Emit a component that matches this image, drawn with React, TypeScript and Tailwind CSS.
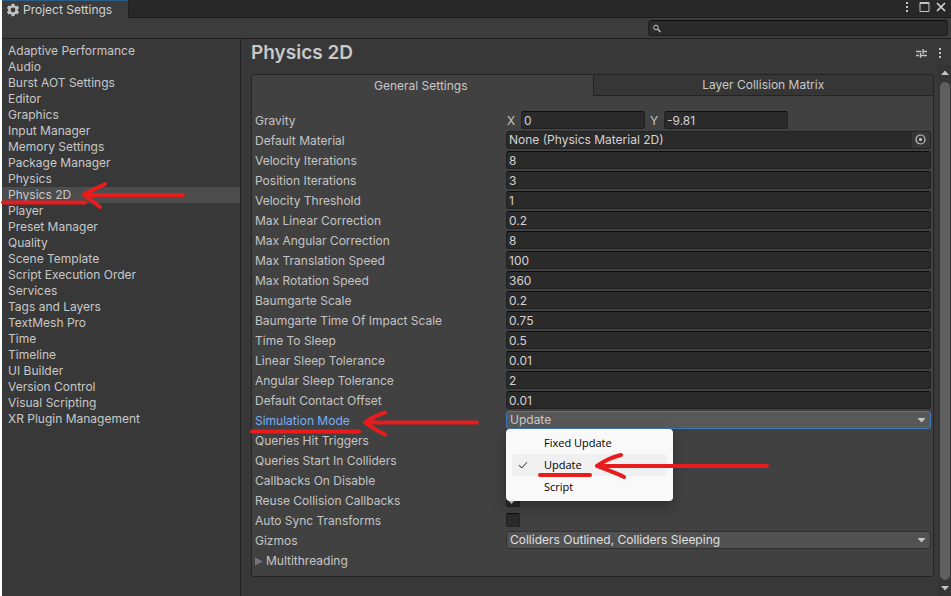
import type { ReactNode } from "react";

const categories = [
  "Adaptive Performance",
  "Audio",
  "Burst AOT Settings",
  "Editor",
  "Graphics",
  "Input Manager",
  "Memory Settings",
  "Package Manager",
  "Physics",
  "Physics 2D",
  "Player",
  "Preset Manager",
  "Quality",
  "Scene Template",
  "Script Execution Order",
  "Services",
  "Tags and Layers",
  "TextMesh Pro",
  "Time",
  "Timeline",
  "UI Builder",
  "Version Control",
  "Visual Scripting",
  "XR Plugin Management",
];

const numberFields: [string, string][] = [
  ["Velocity Iterations", "8"],
  ["Position Iterations", "3"],
  ["Velocity Threshold", "1"],
  ["Max Linear Correction", "0.2"],
  ["Max Angular Correction", "8"],
  ["Max Translation Speed", "100"],
  ["Max Rotation Speed", "360"],
  ["Baumgarte Scale", "0.2"],
  ["Baumgarte Time Of Impact Scale", "0.75"],
  ["Time To Sleep", "0.5"],
  ["Linear Sleep Tolerance", "0.01"],
  ["Angular Sleep Tolerance", "2"],
  ["Default Contact Offset", "0.01"],
];

const toggles: [string, boolean][] = [
  ["Queries Hit Triggers", true],
  ["Queries Start In Colliders", true],
  ["Callbacks On Disable", true],
  ["Reuse Collision Callbacks", true],
  ["Auto Sync Transforms", false],
];

const modes = ["Fixed Update", "Update", "Script"];

const fieldClass =
  "block h-[18px] w-full min-w-0 rounded-[3px] border border-[#212121] border-t-[#0d0d0d] bg-[#2a2a2a] px-0.5 text-[#d2d2d2] outline-none";

const toId = (label: string) => label.toLowerCase().replace(/ /g, "-");

function Row({ label, active, children }: { label: string; active?: boolean; children: ReactNode }) {
  return (
    <div className="grid h-5 grid-cols-[251px_minmax(0,1fr)] items-start">
      <label htmlFor={toId(label)} className={active ? "leading-5 text-[#7baefa]" : "leading-5 text-[#c4c4c4]"}>
        {label}
      </label>
      {children}
    </div>
  );
}

function Caret() {
  return (
    <svg className="pointer-events-none absolute top-[7px] right-[5px]" width="9" height="5" aria-hidden="true">
      <path d="M0.500 0h8L4.500 4.500z" fill="#c4c4c4" />
    </svg>
  );
}

function Kebab() {
  return (
    <svg width="4" height="12" aria-hidden="true" fill="#c4c4c4">
      <path d="M1 1h2v2H1zM1 5h2v2H1zM1 9h2v2H1z" />
    </svg>
  );
}

function TitleBar() {
  return (
    <header className="flex h-[18px] justify-between border-b border-[#1c1c1c] bg-[#282828]">
      <h1 className="-mb-px flex w-[127px] items-center gap-[3px] border-t border-r border-t-[#2c5d87] border-r-[#1f1f1f] bg-[#3c3c3c] pl-1 leading-4 text-[#d2d2d2]">
        <svg width="14" height="14" viewBox="0 0 14 14" aria-hidden="true">
          <g fill="#c4c4c4">
            <path d="M5.500 0.800h3v12.400h-3z" />
            <path d="M5.500 0.800h3v12.400h-3z" transform="rotate(60 7 7)" />
            <path d="M5.500 0.800h3v12.400h-3z" transform="rotate(120 7 7)" />
            <circle cx="7" cy="7" r="4.800" />
          </g>
          <circle cx="7" cy="7" r="2.400" fill="#3c3c3c" />
        </svg>
        Project Settings
      </h1>
      <div className="flex items-start gap-2.5 pr-[5px] pt-px">
        <button aria-label="Window menu">
          <Kebab />
        </button>
        <div className="flex gap-1.5">
          <button aria-label="Maximize">
            <svg width="11" height="12" aria-hidden="true">
              <path d="M1 1.500h9v9H1zM1 2.500h9" fill="none" stroke="#c4c4c4" />
            </svg>
          </button>
          <button aria-label="Close">
            <svg width="10" height="12" aria-hidden="true">
              <path d="M1 2l8 8M9 2l-8 8" stroke="#d2d2d2" strokeWidth="1.7" />
            </svg>
          </button>
        </div>
      </div>
    </header>
  );
}

function SearchBar() {
  return (
    <div className="flex h-[21px] items-start justify-end border-b border-[#1f1f1f] bg-[#3c3c3c] pt-0.5 pr-[3px]">
      <label className="flex h-4 w-[300px] items-center rounded-[4px] border border-[#1e1e1e] border-t-[#0d0d0d] bg-[#2a2a2a] pl-1">
        <svg width="9" height="9" aria-hidden="true" fill="none" stroke="#c4c4c4">
          <circle cx="3" cy="3.500" r="2.300" />
          <path d="M4.700 5.200L7.500 8" strokeWidth="1.300" />
        </svg>
        <input type="search" aria-label="Search settings" className="w-full bg-transparent outline-none" />
      </label>
    </div>
  );
}

function Sidebar() {
  return (
    <nav className="w-[239px] shrink-0 border-r border-[#1f1f1f] pt-1">
      <ul>
        {categories.map((name) => (
          <li key={name} className={name === "Physics 2D" ? "bg-[#4d4d4d]" : ""}>
            <button className="block w-full pl-1.5 text-left leading-4 text-[#c8c8c8]">{name}</button>
          </li>
        ))}
      </ul>
    </nav>
  );
}

function ModePopup() {
  return (
    <ul
      role="listbox"
      aria-label="Simulation Mode"
      className="absolute top-[18px] left-0 z-10 w-[167px] rounded-[4px] bg-[#f9f9f9] px-[6px] py-[3px] font-['Open_Sans','Noto_Sans',sans-serif] text-[11px] text-black shadow-[0_6px_14px_rgba(0,0,0,0.3)]"
    >
      {modes.map((mode) => (
        <li
          key={mode}
          role="option"
          aria-selected={mode === "Update"}
          className={
            mode === "Update"
              ? "flex h-[22px] items-center rounded-[3px] bg-[#f0f0f0]"
              : "flex h-[22px] items-center"
          }
        >
          <span className="w-8 pl-1.5">
            {mode === "Update" && (
              <svg width="10" height="8" aria-hidden="true">
                <path d="M1 4.200L3.700 7L9 1.200" fill="none" stroke="#222" />
              </svg>
            )}
          </span>
          {mode}
        </li>
      ))}
    </ul>
  );
}

function Panel() {
  return (
    <section className="rounded-[3px] border border-[#242424] bg-[#414141] pb-1">
      <div role="tablist" className="grid h-[21px] grid-cols-2 text-[#c8c8c8]">
        <button role="tab" aria-selected="true" className="pr-[3px]">
          General Settings
        </button>
        <button role="tab" aria-selected="false" className="border-b border-l border-[#242424] bg-[#363636]">
          Layer Collision Matrix
        </button>
      </div>
      <div className="pt-[15px] pr-0.5 pb-px pl-[3px]">
        <div
          role="group"
          aria-label="Gravity"
          className="grid h-5 grid-cols-[251px_minmax(0,1fr)] items-start text-[#c4c4c4]"
        >
          <span className="leading-5">Gravity</span>
          <div className="grid grid-cols-3 gap-1">
            <label className="flex items-start">
              <span className="w-[15px] shrink-0 pl-px leading-5">X</span>
              <input className={fieldClass} defaultValue="0" />
            </label>
            <label className="flex items-start">
              <span className="w-[15px] shrink-0 pl-px leading-5">Y</span>
              <input className={fieldClass} defaultValue="-9.81" />
            </label>
          </div>
        </div>
        <Row label="Default Material">
          <div className="flex h-[18px] overflow-hidden rounded-[3px] border border-[#212121] bg-[#2a2a2a]">
            <input
              id="default-material"
              className="min-w-0 flex-1 bg-transparent px-0.5 text-[#d2d2d2] outline-none"
              defaultValue="None (Physics Material 2D)"
            />
            <button aria-label="Pick material" className="flex w-[18px] items-center justify-center bg-[#373737]">
              <svg width="12" height="12" aria-hidden="true">
                <circle cx="5.500" cy="5.500" r="4.500" fill="none" stroke="#c4c4c4" strokeWidth="1.200" />
                <circle cx="5.500" cy="5.500" r="1.600" fill="#c4c4c4" />
              </svg>
            </button>
          </div>
        </Row>
        {numberFields.map(([label, value]) => (
          <Row key={label} label={label}>
            <input id={toId(label)} className={fieldClass} defaultValue={value} />
          </Row>
        ))}
        <Row label="Simulation Mode" active>
          <div className="relative">
            <select
              id="simulation-mode"
              defaultValue="Update"
              className="block h-[18px] w-full appearance-none rounded-[3px] border border-[#3a79bb] bg-[#585858] px-[3px] leading-4 text-[#c8c8c8] outline-none"
            >
              {modes.map((mode) => (
                <option key={mode}>{mode}</option>
              ))}
            </select>
            <Caret />
            <ModePopup />
          </div>
        </Row>
        {toggles.map(([label, checked]) => (
          <Row key={label} label={label}>
            <span className="relative mt-0.5 size-3.5">
              <input
                id={toId(label)}
                type="checkbox"
                defaultChecked={checked}
                className="peer block size-3.5 appearance-none rounded-[2px] border border-[#212121] border-t-[#0d0d0d] bg-[#2a2a2a]"
              />
              <svg
                className="pointer-events-none absolute top-0 left-0 hidden peer-checked:block"
                width="14"
                height="14"
                aria-hidden="true"
              >
                <path d="M3 6.500L5.500 9.500L11 3.500" fill="none" stroke="#d2d2d2" strokeWidth="2" />
              </svg>
            </span>
          </Row>
        ))}
        <Row label="Gizmos">
          <div className="relative">
            <select
              id="gizmos"
              className="block h-[18px] w-full appearance-none rounded-[3px] border border-[#303030] bg-[#515151] px-[3px] leading-4 text-[#e0e0e0] outline-none"
            >
              <option>Colliders Outlined, Colliders Sleeping</option>
            </select>
            <Caret />
          </div>
        </Row>
        <button className="flex h-5 items-center gap-[3px] text-[#c8c8c8]">
          <svg width="8" height="9" aria-hidden="true">
            <path d="M0 0.500L8 4.500L0 8.500z" fill="#757575" />
          </svg>
          Multithreading
        </button>
      </div>
    </section>
  );
}

function Scrollbar() {
  return (
    <div className="mt-[26px] flex w-[13px] shrink-0 flex-col items-center bg-[#353535] pt-[5px] pb-[5px]" aria-hidden="true">
      <svg width="8" height="5">
        <path d="M0 5L4 0.500L8 5z" fill="#c4c4c4" />
      </svg>
      <div className="mt-[7px] mb-1.5 w-2.5 flex-1 rounded-full bg-[#5f5f5f]" />
      <svg width="8" height="5">
        <path d="M0 0L4 4.500L8 0z" fill="#c4c4c4" />
      </svg>
    </div>
  );
}

function Annotations() {
  return (
    <svg
      className="pointer-events-none absolute top-0 -left-0.5 z-20"
      width="951"
      height="596"
      fill="none"
      stroke="#e81c1c"
      strokeWidth="4"
      strokeLinecap="round"
      strokeLinejoin="round"
      aria-hidden="true"
    >
      <path d="M3 202.500H85" />
      <path d="M183 195H84M105 184C97 188 90 191 84 194.500C89 199 95 203 100 207" />
      <path d="M252 431.500H359" />
      <path d="M477 422.500H365M385 412.500C377 415 370 419 365 422.500C371 427 378 431 385 434.500" />
      <path d="M540 475H590" />
      <path d="M767 466H597M621 455C612 457 604 461 597 466C607 470 616 473 624 477" />
    </svg>
  );
}

export default function App() {
  return (
    <div className="relative flex min-h-screen flex-col border-l-2 border-white bg-[#383838] font-[Inter,sans-serif] text-[12px] leading-4">
      <TitleBar />
      <SearchBar />
      <div className="flex flex-1">
        <Sidebar />
        <main className="min-w-0 flex-1 pr-1 pb-4 pl-2.5">
          <div className="flex h-[35px] items-start justify-between pt-0.5">
            <h2 className="text-[19px] leading-6 font-semibold text-[#c8c8c8]">Physics 2D</h2>
            <button aria-label="Presets" className="mt-[7px] mr-[7px]">
              <svg width="11" height="11" aria-hidden="true" stroke="#c4c4c4" strokeWidth="1.300">
                <path d="M0 3.500H5.500M7 3.500H11M7 1V6M0 7.500H3M5 7.500H11M4.500 5V10" />
              </svg>
            </button>
          </div>
          <Panel />
        </main>
        <div className="flex flex-col">
          <button aria-label="Settings menu" className="-mb-5 h-5 pt-2">
            <Kebab />
          </button>
          <div className="flex flex-1">
            <Scrollbar />
          </div>
        </div>
      </div>
      <Annotations />
    </div>
  );
}
